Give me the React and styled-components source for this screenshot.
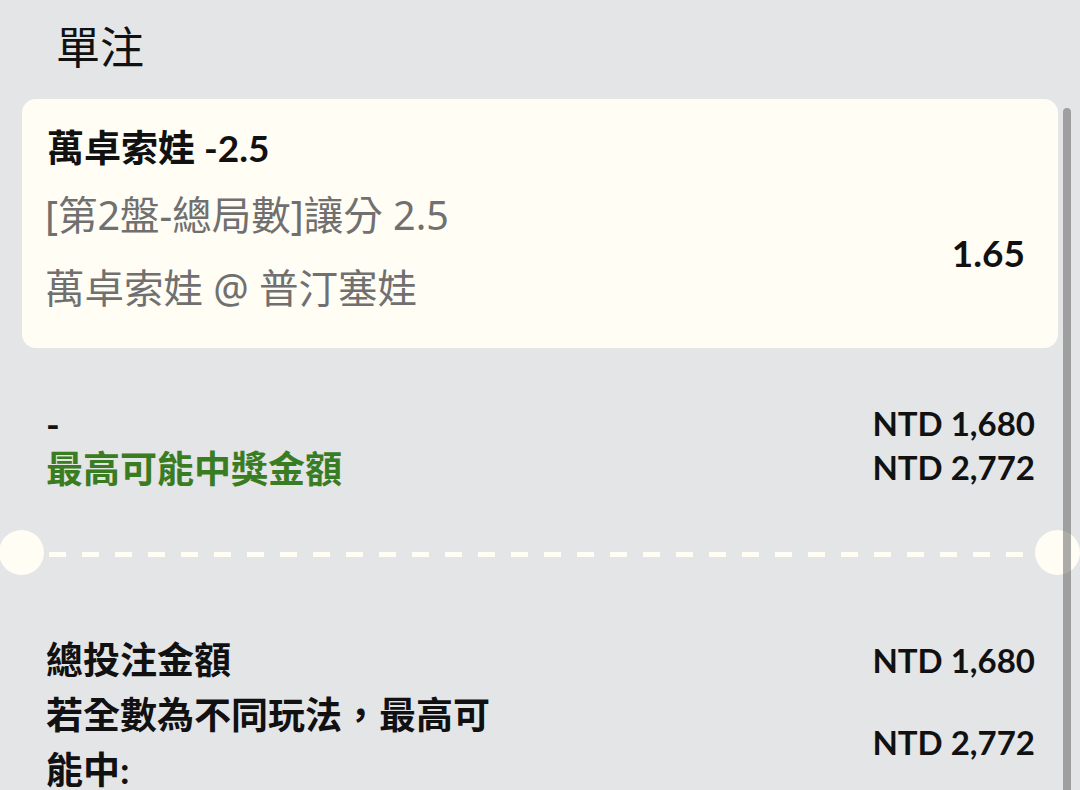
import React from "react";
import styled, { createGlobalStyle } from "styled-components";

const GlobalStyle = createGlobalStyle`
  html, body {
    margin: 0;
    padding: 0;
    height: 100%;
    overflow: hidden;
    background-color: #e4e5e7;
  }
  body {
    font-family: Lato, "Noto Sans CJK TC", sans-serif;
    color: #111;
  }
`;

const summaryRows = [
  { label: "-", value: "NTD 1,680" },
  { label: "最高可能中獎金額", value: "NTD 2,772", green: true },
];

const totalRows = [
  { label: "總投注金額", value: "NTD 1,680" },
  { label: "若全數為不同玩法，最高可能中:", value: "NTD 2,772" },
];

function App() {
  return (
    <>
      <GlobalStyle />
      <StPage>
        <StHeader>單注</StHeader>
        <StCard>
          <StBetTitle>萬卓索娃 -2.5</StBetTitle>
          <StBetBody>
            <StBetDetails>
              <div>[第2盤-總局數]讓分 2.5</div>
              <div>萬卓索娃 @ 普汀塞娃</div>
            </StBetDetails>
            <StOdds>1.65</StOdds>
          </StBetBody>
        </StCard>

        <StSummary>
          {summaryRows.map((row) => (
            <StSummaryRow key={row.value}>
              <StSummaryLabel $green={row.green}>{row.label}</StSummaryLabel>
              <StAmount>{row.value}</StAmount>
            </StSummaryRow>
          ))}
        </StSummary>

        <StDivider>
          <StNotch />
          <StDashes />
          <StNotch />
        </StDivider>

        <StTotals>
          {totalRows.map((row) => (
            <StTotalRow key={row.label}>
              <StTotalLabel>{row.label}</StTotalLabel>
              <StAmount>{row.value}</StAmount>
            </StTotalRow>
          ))}
        </StTotals>
      </StPage>
      <StScrollThumb />
    </>
  );
}

const StPage = styled.div`
  padding: 0 22px;
  display: flex;
  flex-direction: column;
`;

const StHeader = styled.h1`
  margin: 0 0 9px 34px;
  height: 90px;
  display: flex;
  align-items: center;
  font-family: "Noto Sans CJK TC", sans-serif;
  font-size: 44px;
  font-weight: 400;
  color: #111;
`;

const StCard = styled.div`
  background-color: #fffdf4;
  border-radius: 14px;
  padding: 24px 33px 23px 25px;
  display: flex;
  flex-direction: column;
`;

const StBetTitle = styled.div`
  font-size: 37px;
  font-weight: 700;
  line-height: 50px;
  margin-bottom: 6px;
`;

const StBetBody = styled.div`
  display: flex;
  align-items: center;
  justify-content: space-between;
`;

const StBetDetails = styled.div`
  margin-left: -2px;
  font-family: "Noto Sans", "Noto Sans CJK TC", sans-serif;
  font-size: 39.5px;
  line-height: 73px;
  color: #707070;
`;

const StOdds = styled.div`
  font-size: 37px;
  font-weight: 700;
  color: #111;
`;

const StSummary = styled.div`
  margin-top: 53px;
  padding: 0 23px 0 24px;
  display: flex;
  flex-direction: column;
`;

const StSummaryRow = styled.div`
  display: flex;
  align-items: center;
  justify-content: space-between;
  height: 44px;
`;

const StSummaryLabel = styled.div`
  font-size: 37px;
  font-weight: 700;
  color: ${(props) => (props.$green ? "#3a7c22" : "#111")};
`;

const StAmount = styled.div`
  font-size: 33px;
  font-weight: 700;
  color: #111;
  white-space: nowrap;
`;

const StDivider = styled.div`
  margin: 41px -22px 0 -23px;
  display: flex;
  align-items: center;
  gap: 5px;
`;

const StNotch = styled.div`
  width: 45px;
  height: 45px;
  border-radius: 50%;
  background-color: #fffdf4;
  flex-shrink: 0;
`;

const StDashes = styled.div`
  flex: 1;
  height: 5px;
  margin-top: 3px;
  background: repeating-linear-gradient(
    to right,
    #fffdf4 0 17px,
    transparent 17px 33px
  );
`;

const StTotals = styled.div`
  margin-top: 57px;
  padding: 0 23px 0 24px;
  display: flex;
  flex-direction: column;
`;

const StTotalRow = styled.div`
  display: flex;
  align-items: center;
  justify-content: space-between;
`;

const StTotalLabel = styled.div`
  max-width: 460px;
  font-size: 37px;
  font-weight: 700;
  line-height: 55px;
`;

const StScrollThumb = styled.div`
  position: fixed;
  top: 108px;
  right: 9px;
  width: 8px;
  bottom: -20px;
  border-radius: 4px;
  background-color: rgba(90, 90, 90, 0.5);
`;

export default App;
